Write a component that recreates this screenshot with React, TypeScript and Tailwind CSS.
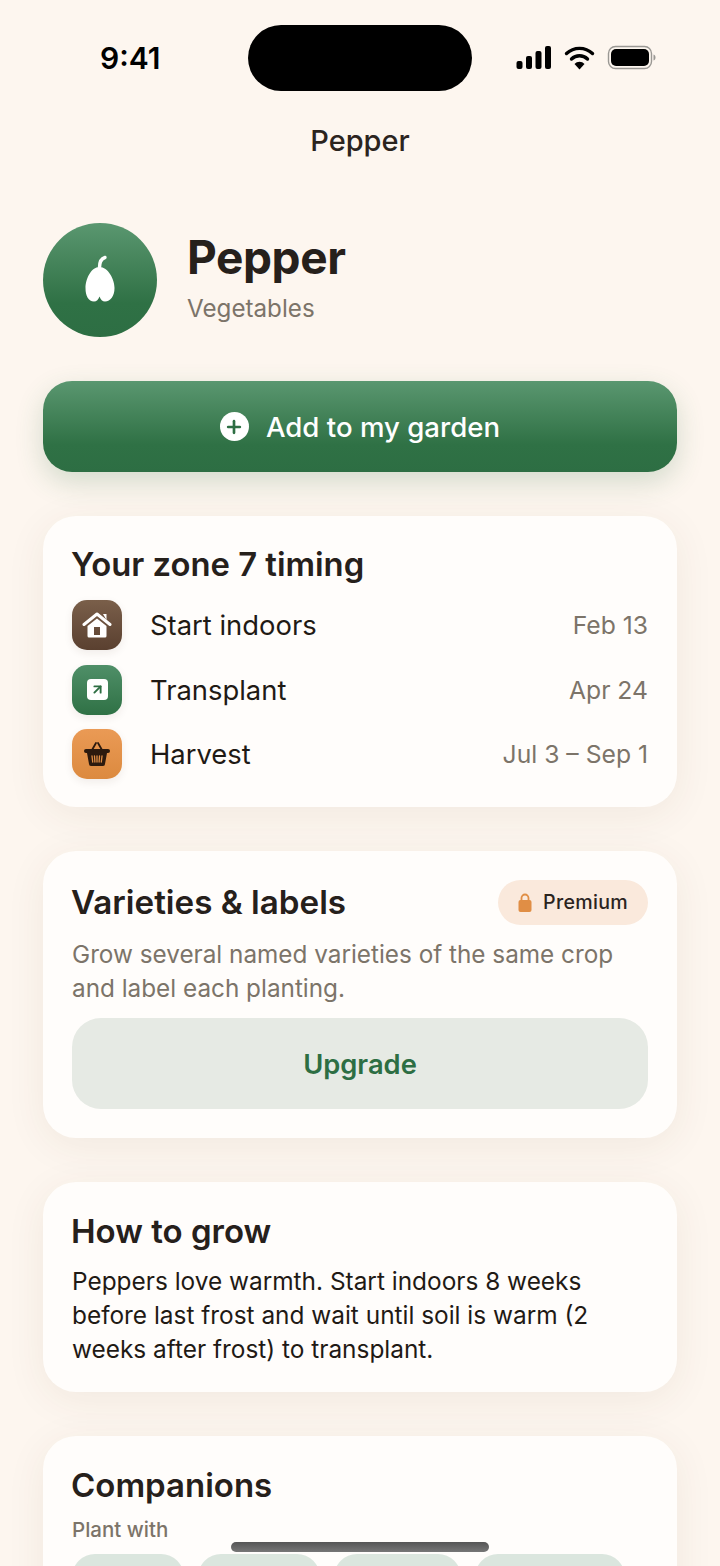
import { ArrowUpRight, Plus } from 'lucide-react'

function StatusBar() {
    return (
        <div className="relative flex h-[116px] items-start justify-between">
            <span className="mt-[39px] ml-[100px] text-[30px] leading-[38px] font-semibold text-black">9:41</span>
            <div className="absolute left-[248px] top-[25px] h-[66px] w-[224px] rounded-[33px] bg-black"></div>
            <svg className="mt-[44px] mr-[62px]" width="142" height="28" viewBox="0 0 142 28">
                <rect x="0.5" y="17" width="6" height="8" rx="2" fill="#000" />
                <rect x="10" y="12" width="6" height="13" rx="2" fill="#000" />
                <rect x="19.5" y="7" width="6" height="18" rx="2" fill="#000" />
                <rect x="29" y="2" width="6" height="23" rx="2" fill="#000" />
                <path d="M50.500 9.500a19 19 0 0 1 26 0" fill="none" stroke="#000" strokeWidth="3.4" strokeLinecap="round" />
                <path d="M55.500 15a11.500 11.500 0 0 1 16 0" fill="none" stroke="#000" strokeWidth="3.4" strokeLinecap="round" />
                <path d="M58.500 20a6.500 6.500 0 0 1 10 0l-5 5.500z" fill="#000" />
                <rect x="92.500" y="2.500" width="43" height="22" rx="7" fill="none" stroke="#9a9894" strokeWidth="1.4" />
                <rect x="95" y="5" width="38" height="17" rx="5" fill="#000" />
                <path d="M137.500 10.500c1.600.5 2 2 2 3s-.4 2.500-2 3z" fill="#9a9894" />
            </svg>
        </div>
    )
}

function PepperIcon() {
    return (
        <svg className="mt-[-2px]" width="30" height="48" viewBox="0 0 30 48">
            <path d="M20 2.500c-3.500 1-5.500 4-5.500 10" fill="none" stroke="#fff" strokeWidth="3.4" strokeLinecap="round" />
            <path d="M14.500 12C6 12 .5 24 .5 33c0 8 3 13.500 8.500 13.500 2.500 0 4.500-2 5.500-5 1 3 3 5 5.500 5 5.500 0 9.500-5.500 9.500-13.500C29.500 24 23 12 14.500 12z" fill="#fff" />
        </svg>
    )
}

function HouseIcon() {
    return (
        <svg width="30" height="28" viewBox="0 0 30 28">
            <path d="M2 13.500 15 3l13 10.500" fill="none" stroke="#fff" strokeWidth="3" strokeLinecap="round" strokeLinejoin="round" />
            <path d="M21 3h3.500v6z" fill="#fff" />
            <path d="M5.500 15 15 7.500 24.500 15v10a1.500 1.500 0 0 1-1.500 1.500H7A1.500 1.500 0 0 1 5.500 25zM12 16v8h6v-8z" fill="#fff" fillRule="evenodd" />
        </svg>
    )
}

function BasketIcon() {
    return (
        <svg width="28" height="26" viewBox="0 0 28 26">
            <path d="M9 9l4-7M19 9l-4-7" fill="none" stroke="#2c1a0e" strokeWidth="1.8" strokeLinecap="round" />
            <rect x="1" y="8" width="26" height="4" rx="2" fill="#2c1a0e" />
            <path d="M4 12h20l-2 11a2 2 0 0 1-2 2H8a2 2 0 0 1-2-2z" fill="#2c1a0e" />
            <path d="M9 15l.7 6M14 15v6M19 15l-.7 6M11.500 15l.4 6M16.500 15l-.4 6" stroke="#e08e45" strokeWidth="1.300" strokeLinecap="round" />
        </svg>
    )
}

function LockIcon() {
    return (
        <svg width="14" height="19" viewBox="0 0 14 19">
            <path d="M3.500 8V5a3.500 3.500 0 0 1 7 0v3" fill="none" stroke="#e08e45" strokeWidth="1.800" />
            <rect x="0.500" y="7" width="13" height="12" rx="2" fill="#e08e45" />
        </svg>
    )
}

function TimingRow({ label, value, icon, iconClass }: { label: string; value: string; icon: React.ReactNode; iconClass: string }) {
    return (
        <div className="flex h-[50px] items-center">
            <div className={`flex h-[50px] w-[50px] items-center justify-center rounded-[15px] shadow-[0_3px_8px_rgba(60,40,20,0.08)] ${iconClass}`}>
                {icon}
            </div>
            <span className="ml-[28px] text-[27.400px] leading-[34px] text-[#1f1a15]">{label}</span>
            <span className="ml-auto text-[24.700px] leading-[32px] text-[#7c7469]">{value}</span>
        </div>
    )
}

function Card({ children, className }: { children: React.ReactNode; className: string }) {
    return (
        <div className={`rounded-[33px] bg-[#fffdfb] px-[29px] shadow-[0_8px_40px_rgba(80,60,30,0.07)] ${className}`}>
            {children}
        </div>
    )
}

export default function App() {
    return (
        <div className="relative h-[1566px] w-[720px] overflow-hidden bg-[#fdf6ef] font-['Inter',sans-serif]">
            <StatusBar />
            <h1 className="text-center text-[29px] leading-[50px] font-medium text-[#2b241e]">Pepper</h1>

            <div className="flex flex-col gap-[44px] px-[43px] pt-[57px]">
                <div className="flex flex-col gap-[44px]">
                    <div className="flex items-center">
                        <div className="flex h-[114px] w-[114px] items-center justify-center rounded-full bg-gradient-to-b from-[#5a9770] via-[#2f7145] via-70% to-[#2d6e43]">
                            <PepperIcon />
                        </div>
                        <div className="ml-[30px] flex flex-col">
                            <span className="mt-[-6px] text-[46px] leading-[56px] font-bold tracking-[-0.4px] text-[#26201b]">Pepper</span>
                            <span className="mt-[8px] text-[24.200px] leading-[32px] text-[#7c7469]">Vegetables</span>
                        </div>
                    </div>
                    <div className="flex h-[91px] items-center justify-center rounded-[29px] bg-gradient-to-b from-[#5a9770] via-[#2f7145] via-70% to-[#2d6e43] shadow-[0_10px_28px_rgba(45,110,67,0.2)]">
                        <span className="flex h-[29px] w-[29px] items-center justify-center rounded-full bg-white">
                            <Plus size={20} strokeWidth={3.2} color="#2d6e43" />
                        </span>
                        <span className="ml-[17px] text-[27.600px] leading-[36px] font-medium text-white">Add to my garden</span>
                    </div>
                </div>

                <Card className="flex h-[291px] flex-col pt-[28px]">
                    <h2 className="ml-[-1px] text-[32.800px] leading-[40px] font-semibold text-[#26201b]">Your zone 7 timing</h2>
                    <div className="mt-[16px] flex flex-col gap-[14.500px]">
                        <TimingRow
                            label="Start indoors"
                            value="Feb 13"
                            iconClass="bg-gradient-to-b from-[#7a5f4a] to-[#5a4030]"
                            icon={<HouseIcon />}
                        />
                        <TimingRow
                            label="Transplant"
                            value="Apr 24"
                            iconClass="bg-gradient-to-b from-[#4f8f68] to-[#2f7145]"
                            icon={
                                <span className="flex h-[21px] w-[21px] items-center justify-center rounded-[4px] bg-white">
                                    <ArrowUpRight size={15} strokeWidth={3} color="#2d6e43" />
                                </span>
                            }
                        />
                        <TimingRow
                            label="Harvest"
                            value="Jul 3 – Sep 1"
                            iconClass="bg-gradient-to-b from-[#ea9a55] to-[#dc8a3f]"
                            icon={<BasketIcon />}
                        />
                    </div>
                </Card>

                <Card className="flex h-[287px] flex-col pt-[28px]">
                    <div className="flex h-[46px] items-center justify-between">
                        <h2 className="ml-[-1px] text-[33.200px] leading-[40px] font-semibold text-[#26201b]">Varieties &amp; labels</h2>
                        <span className="flex h-[45px] w-[150px] items-center justify-center gap-[11px] rounded-full bg-[#fae9dc]">
                            <LockIcon />
                            <span className="text-[19.600px] leading-[26px] font-medium tracking-[0.3px] text-[#2b241e]">Premium</span>
                        </span>
                    </div>
                    <p className="mt-[12px] text-[24.300px] leading-[34px] text-[#7c7469]">
                        Grow several named varieties of the same crop and label each planting.
                    </p>
                    <div className="mt-[13px] flex h-[91px] items-center justify-center rounded-[29px] bg-[#e6eae4] pt-[3px] text-[27.300px] font-semibold text-[#2d6e43]">
                        Upgrade
                    </div>
                </Card>

                <Card className="flex h-[210px] flex-col pt-[29px]">
                    <h2 className="ml-[-1px] text-[33px] leading-[40px] font-semibold text-[#26201b]">How to grow</h2>
                    <p className="mt-[13px] text-[24.400px] leading-[34px] text-[#1f1a15]">
                        Peppers love warmth. Start indoors 8 weeks before last frost and wait until soil is warm (2 weeks after frost) to transplant.
                    </p>
                </Card>

                <Card className="flex h-[300px] translate-y-0 flex-col pt-[29px]">
                    <h2 className="ml-[-1px] text-[33px] leading-[40px] font-semibold text-[#26201b]">Companions</h2>
                    <span className="mt-[12px] text-[20.500px] leading-[26px] font-medium text-[#7c7469]">Plant with</span>
                    <div className="mt-[11px] flex gap-[14px]">
                        <div className="h-[46px] w-[112px] rounded-full bg-[#dbe6de]"></div>
                        <div className="h-[46px] w-[122px] rounded-full bg-[#dbe6de]"></div>
                        <div className="h-[46px] w-[127px] rounded-full bg-[#dbe6de]"></div>
                        <div className="h-[46px] w-[150px] rounded-full bg-[#dbe6de]"></div>
                    </div>
                </Card>
            </div>

            <div className="absolute left-[231px] top-[1542px] h-[10px] w-[258px] rounded-full bg-gradient-to-b from-[#555] to-[#777]"></div>
        </div>
    )
}
